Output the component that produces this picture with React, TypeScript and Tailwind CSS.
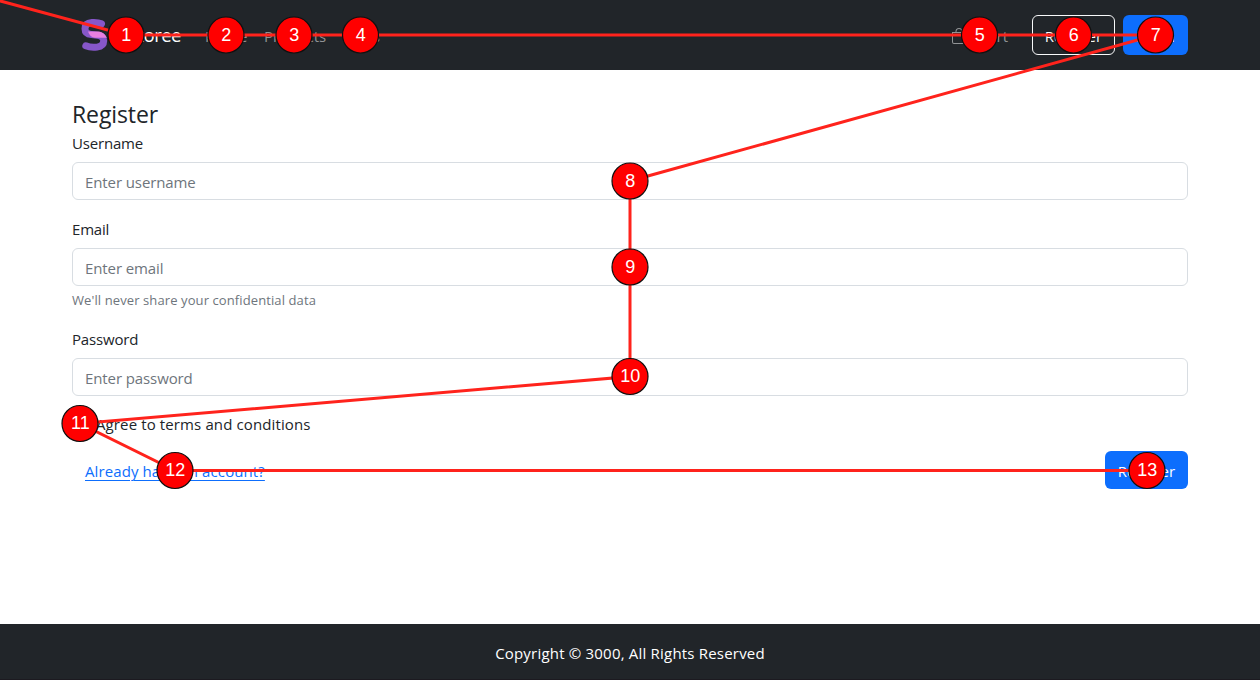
import React from "react";

const stops: [number, number][] = [
  [126, 35], [226, 35], [294, 35], [360.5, 35], [979.5, 35], [1073.5, 35], [1155.5, 35],
  [630, 181], [630, 267], [630, 376.5], [80, 423.5], [175, 470.5], [1147, 470.5],
];

function TabOrder() {
  const points = [[-40, -10], ...stops].map((p) => p.join(",")).join(" ");
  return (
    <svg className="pointer-events-none absolute inset-0" width="1260" height="680" viewBox="0 0 1260 680">
      <polyline points={points} fill="none" stroke="#ff231c" strokeWidth="3" />
      {stops.map(([x, y], i) => (
        <g key={i}>
          <circle cx={x} cy={y} r="18" fill="#ff0000" stroke="#101010" strokeWidth="1.2" />
          <text x={x + 0.3} y={y + 5.6} textAnchor="middle" fill="#fff" fontSize="18" fontFamily="Liberation Sans, Arial, sans-serif">
            {i + 1}
          </text>
        </g>
      ))}
    </svg>
  );
}

function Logo() {
  return (
    <svg width="27" height="32" viewBox="0 0 27 32" fill="none" className="ml-[9px]">
      <path d="M20.5 4.8C17.5 3.5 14 3.4 10.8 3.6C6 4 4 6.500 4 9.800C4 13.500 6.500 15.300 10.500 15.600L16.500 16.200C20.500 16.700 22.700 18.500 22.700 21.800C22.700 25.700 19.800 27.600 16 28.100C12 28.600 8 28.200 4.800 26.800" stroke="#8757c9" strokeWidth="7" strokeLinecap="round" />
      <path d="M7 12.500H18Q23.500 13.500 25.800 18.800H14Q9 18.300 7 12.500Z" fill="#e87fe0" />
    </svg>
  );
}

function BagIcon() {
  return (
    <svg width="16" height="16" viewBox="0 0 16 16" fill="#919395" className="mr-3">
      <path d="M8 1a2.500 2.500 0 0 1 2.500 2.500V4h-5v-.5A2.500 2.500 0 0 1 8 1m3.500 3v-.5a3.500 3.500 0 1 0-7 0V4H1v10a2 2 0 0 0 2 2h10a2 2 0 0 0 2-2V4zM2 5h12v9a1 1 0 0 1-1 1H3a1 1 0 0 1-1-1z" />
    </svg>
  );
}

function Field({ label, type, placeholder, hint }: { label: string; type: string; placeholder: string; hint?: string }) {
  return (
    <div className="mb-4">
      <label className="mb-2 block h-6 pt-px leading-6 tracking-[-0.18px]">{label}</label>
      <input
        type={type}
        placeholder={placeholder}
        className="block h-[38px] w-full rounded-md border border-[#d8dde2] px-3 pt-0.5 tracking-[-0.1px] outline-none placeholder:text-[#6e757c]"
      />
      {hint && <div className="mt-1 h-5 text-[13px] leading-[20px] tracking-[0.1px] text-[#6e757c]">{hint}</div>}
    </div>
  );
}

export default function App() {
  return (
    <div className="relative flex h-[680px] w-[1260px] flex-col overflow-hidden bg-white font-['Open_Sans','Noto_Sans',sans-serif] text-[15px] leading-6 text-[#212529]">
      <header className="flex h-[70px] items-center bg-[#212529] px-[72px] text-[#919395]">
        <Logo />
        <span className="w-[73px] text-right text-[18.5px] font-medium tracking-[-0.5px] text-white">Storee</span>
        <nav className="ml-6 flex gap-4 pt-0.5">
          <a className="w-[43px]">Home</a>
          <a className="w-[62px]">Products</a>
          <a>Blogs</a>
        </nav>
        <a className="mr-6 ml-auto flex items-center pt-0.5"><BagIcon />Cart</a>
        <button className="h-10 w-[83px] rounded-md border border-[#f8f9fa] pt-0.5 tracking-[0.1px] text-[#f8f9fa]">Register</button>
        <button className="ml-2 h-10 w-[65px] rounded-md bg-[#0d6efd] pt-0.5 tracking-[0.2px] text-white">Login</button>
      </header>
      <main className="flex-1 px-[72px] pt-[30px]">
        <h1 className="h-[30px] text-[23px] leading-[28px] tracking-[-0.1px]">Register</h1>
        <form>
          <Field label="Username" type="text" placeholder="Enter username" />
          <Field label="Email" type="email" placeholder="Enter email" hint="We'll never share your confidential data" />
          <Field label="Password" type="password" placeholder="Enter password" />
          <label className="flex h-6 items-center gap-2">
            <input type="checkbox" className="size-4" />
            <span className="tracking-[0.12px]">Agree to terms and conditions</span>
          </label>
          <div className="mt-[15px] flex items-center justify-between">
            <a className="ml-[13px] pt-0.5 tracking-[0.1px] text-[#0d6efd] underline underline-offset-[3px]">Already have an account?</a>
            <button type="button" className="h-[38px] w-[83px] rounded-md bg-[#0d6efd] pt-0.5 tracking-[0.1px] text-white">Register</button>
          </div>
        </form>
      </main>
      <footer className="flex h-14 items-center justify-center border-b border-[#1c1a20] bg-[#212529] pt-[3px] tracking-[0.2px] text-white">
        Copyright © 3000, All Rights Reserved
      </footer>
      <TabOrder />
    </div>
  );
}
